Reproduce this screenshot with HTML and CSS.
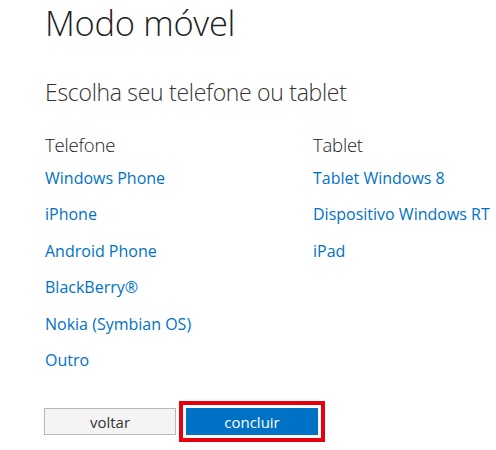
FILE: index.html
```html
<!DOCTYPE html>
<html lang="pt">
<head>
<meta charset="utf-8">
<link rel="stylesheet" href="styles.css">
</head>
<body>
<div class="page">
  <h1 class="title">Modo móvel</h1>
  <h2 class="subtitle">Escolha seu telefone ou tablet</h2>
  <div class="cols">
    <div class="col col-phone">
      <h3 class="col-head">Telefone</h3>
      <ul class="links">
        <li><a href="#">Windows Phone</a></li>
        <li><a href="#">iPhone</a></li>
        <li><a href="#">Android Phone</a></li>
        <li><a href="#">BlackBerry®</a></li>
        <li><a href="#">Nokia (Symbian OS)</a></li>
        <li><a href="#">Outro</a></li>
      </ul>
    </div>
    <div class="col">
      <h3 class="col-head">Tablet</h3>
      <ul class="links">
        <li><a href="#">Tablet Windows 8</a></li>
        <li><a href="#">Dispositivo Windows RT</a></li>
        <li><a href="#">iPad</a></li>
      </ul>
    </div>
  </div>
  <div class="actions">
    <button class="btn btn-back">voltar</button>
    <span class="highlight"><button class="btn btn-primary">concluir</button></span>
  </div>
</div>
</body>
</html>
```

FILE: styles.css
```css
html, body {
  margin: 0;
  padding: 0;
  background: #fff;
}
body {
  font-family: "Open Sans", "Noto Sans", sans-serif;
  color: #333;
}
.page {
  padding-left: 45px;
}
.title {
  margin: 0;
  font-size: 34.5px;
  font-weight: 300;
  line-height: 46px;
  color: #222;
  letter-spacing: -0.3px;
  white-space: nowrap;
}
.subtitle {
  margin: 31px 0 0 0;
  font-size: 23px;
  font-weight: 300;
  line-height: 30px;
  color: #333;
  letter-spacing: -0.3px;
}
.cols {
  display: flex;
  margin-top: 25px;
}
.col-phone {
  width: 268px;
}
.col-head {
  margin: 0;
  font-size: 18.5px;
  font-weight: 300;
  line-height: 26px;
  color: #222;
  letter-spacing: -0.2px;
}
.links {
  list-style: none;
  margin: 8px 0 0 0;
  padding: 0;
}
.links li {
  height: 36.4px;
  line-height: 24px;
  font-size: 16px;
  white-space: nowrap;
}
.links a {
  color: #0072c6;
  text-decoration: none;
}
.actions {
  display: flex;
  align-items: center;
  margin-top: 17px;
  margin-left: -1px;
}
.btn {
  font-family: inherit;
  font-size: 15px;
  width: 132px;
  height: 27px;
  padding: 0;
  margin: 0;
  cursor: pointer;
}
.btn-back {
  background: #f4f4f4;
  border: 1px solid #b9b9b9;
  color: #333;
}
.highlight {
  display: flex;
  margin-left: 3px;
  padding: 3px;
  border: 4px solid #e8000e;
}
.btn-primary {
  background: #0072c6;
  border: none;
  color: #fff;
}
```
